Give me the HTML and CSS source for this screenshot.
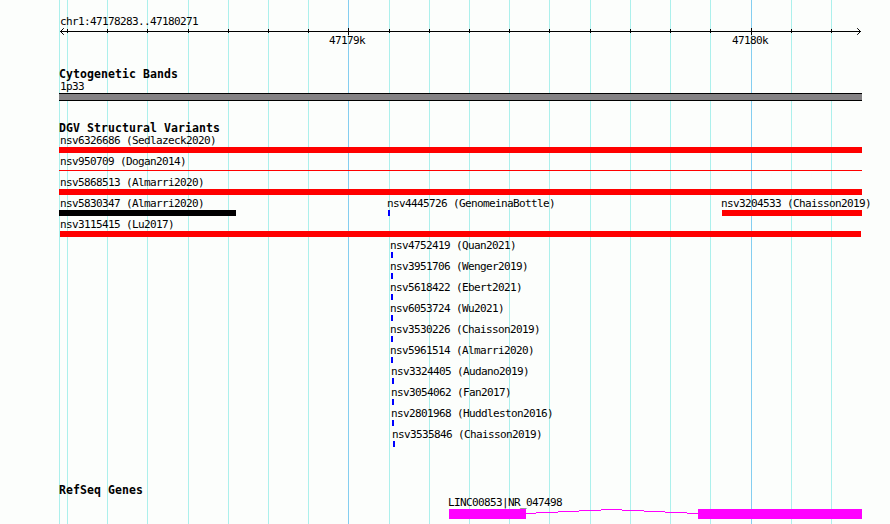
FILE: index.html
```html
<!DOCTYPE html>
<html lang="en">
  <head>
    <meta charset="UTF-8" />
    <title>chr1:47178283..47180271</title>
    <link rel="stylesheet" href="styles.css">
  </head>
  <body>
    <div class="browser">
      <!-- Grid lines behind all tracks -->
      <svg class="gridlines" width="890" height="524" shape-rendering="crispEdges">
        <path class="minor" d="M59.5 0V524M67.5 0V524M107.5 0V524M147.5 0V524M188.5 0V524M228.5 0V524M268.5 0V524M308.5 0V524M389.5 0V524M429.5 0V524M469.5 0V524M509.5 0V524M549.5 0V524M590.5 0V524M630.5 0V524M670.5 0V524M710.5 0V524M791.5 0V524M831.5 0V524" />
        <path class="major" d="M348.5 0V524M751.5 0V524" />
      </svg>

      <!-- Ruler -->
      <div class="ruler">
        <div class="label region">chr1:47178283..47180271</div>
        <svg class="scale" width="890" height="22" viewBox="0 26 890 22">
          <path shape-rendering="crispEdges" d="M60 31.5H861M67.5 29V33M107.5 29V33M147.5 29V33M188.5 29V33M228.5 29V33M268.5 29V33M308.5 29V33M348.5 28V35M389.5 29V33M429.5 29V33M469.5 29V33M509.5 29V33M549.5 29V33M590.5 29V33M630.5 29V33M670.5 29V33M710.5 29V33M751.5 28V35M791.5 29V33M831.5 29V33" />
          <path d="M63.8 28.2L60.5 31.5L63.8 34.8M857.2 28.2L860.5 31.5L857.2 34.8" />
          <text class="label" x="329" y="44">47179k</text>
          <text class="label" x="732" y="44">47180k</text>
        </svg>
      </div>

      <!-- Cytogenetic bands -->
      <div class="track bands">
        <h2>Cytogenetic Bands</h2>
        <div class="row">
          <div class="feature edge" style="margin-left: 59px; width: 803px">
            <span class="label">1p33</span>
            <div class="band"></div>
          </div>
        </div>
      </div>

      <!-- Structural variants -->
      <div class="track variants">
        <h2>DGV Structural Variants</h2>
        <div class="row">
          <div class="feature edge" style="margin-left: 59px; width: 803px"><span class="label">nsv6326686 (Sedlazeck2020)</span><div class="bar loss"></div></div>
        </div>
        <div class="row">
          <div class="feature edge" style="margin-left: 59px; width: 803px"><span class="label">nsv950709 (Dogan2014)</span><div class="bar loss thin"></div></div>
        </div>
        <div class="row">
          <div class="feature edge" style="margin-left: 59px; width: 803px"><span class="label">nsv5868513 (Almarri2020)</span><div class="bar loss"></div></div>
        </div>
        <div class="row">
          <div class="feature edge" style="margin-left: 59px; width: 177px"><span class="label">nsv5830347 (Almarri2020)</span><div class="bar other"></div></div>
          <div class="feature" style="margin-left: 388px; width: 2px"><span class="label">nsv4445726 (GenomeinaBottle)</span><div class="bar gain"></div></div>
          <div class="feature" style="margin-left: 722px; width: 140px"><span class="label">nsv3204533 (Chaisson2019)</span><div class="bar loss"></div></div>
        </div>
        <div class="row">
          <div class="feature flush" style="margin-left: 60px; width: 801px"><span class="label">nsv3115415 (Lu2017)</span><div class="bar loss"></div></div>
        </div>
        <div class="row">
          <div class="feature" style="margin-left: 391px; width: 2px"><span class="label">nsv4752419 (Quan2021)</span><div class="bar gain"></div></div>
        </div>
        <div class="row">
          <div class="feature" style="margin-left: 391px; width: 2px"><span class="label">nsv3951706 (Wenger2019)</span><div class="bar gain"></div></div>
        </div>
        <div class="row">
          <div class="feature" style="margin-left: 391px; width: 2px"><span class="label">nsv5618422 (Ebert2021)</span><div class="bar gain"></div></div>
        </div>
        <div class="row">
          <div class="feature" style="margin-left: 391px; width: 2px"><span class="label">nsv6053724 (Wu2021)</span><div class="bar gain"></div></div>
        </div>
        <div class="row">
          <div class="feature" style="margin-left: 391px; width: 2px"><span class="label">nsv3530226 (Chaisson2019)</span><div class="bar gain"></div></div>
        </div>
        <div class="row">
          <div class="feature" style="margin-left: 391px; width: 2px"><span class="label">nsv5961514 (Almarri2020)</span><div class="bar gain"></div></div>
        </div>
        <div class="row">
          <div class="feature" style="margin-left: 392px; width: 2px"><span class="label">nsv3324405 (Audano2019)</span><div class="bar gain"></div></div>
        </div>
        <div class="row">
          <div class="feature" style="margin-left: 392px; width: 2px"><span class="label">nsv3054062 (Fan2017)</span><div class="bar gain"></div></div>
        </div>
        <div class="row">
          <div class="feature" style="margin-left: 392px; width: 2px"><span class="label">nsv2801968 (Huddleston2016)</span><div class="bar gain"></div></div>
        </div>
        <div class="row">
          <div class="feature" style="margin-left: 393px; width: 2px"><span class="label">nsv3535846 (Chaisson2019)</span><div class="bar gain"></div></div>
        </div>
      </div>

      <!-- Genes -->
      <div class="track genes">
        <h2>RefSeq Genes</h2>
        <div class="row">
          <div class="feature" style="margin-left: 449px; width: 413px">
            <span class="label">LINC00853|NR_047498</span>
            <svg class="gene" width="413" height="10" shape-rendering="crispEdges">
              <rect x="0" y="0" width="77" height="10" />
              <rect x="249" y="0" width="164" height="10" />
              <path d="M77 4.5H87M87 3.5H109M109 2.5H130M130 1.5H152M152 .5H173M173 1.5H195M195 2.5H216M216 3.5H238M238 4.5H249" />
            </svg>
          </div>
        </div>
      </div>
    </div>
  </body>
</html>
```
FILE: styles.css
```css
body {
  margin: 0;
  background: #fcfefc;
  color: #000;
  font-family: "DejaVu Sans Mono", monospace;
}

.browser {
  position: relative;
  width: 890px;
  height: 524px;
  overflow: hidden;
  display: flex;
  flex-direction: column;
}

/* Grid lines */
.gridlines {
  position: absolute;
  top: 0;
  left: 0;
  z-index: -1;
}

.gridlines .minor {
  stroke: #acf0ec;
}

.gridlines .major {
  stroke: #84cef0;
}

/* Text, 6px per character */
.label {
  font-size: 11px;
  line-height: 13px;
  letter-spacing: -0.623px;
  white-space: pre;
}

h2 {
  height: 12px;
  margin: 0 0 0 59px;
  font-size: 11.5px;
  line-height: 12px;
  font-weight: bold;
  letter-spacing: 0.077px;
}

/* Ruler */
.ruler {
  height: 53px;
  padding-top: 15px;
}

.region {
  height: 11px;
  margin-left: 60px;
}

.scale {
  display: block;
  fill: none;
  stroke: #000;
}

.scale text {
  fill: #000;
  stroke: none;
}

/* Tracks */
.bands {
  height: 54px;
}

.variants {
  height: 362px;
}

.bands,
.variants,
.genes {
  flex: none;
}

.row {
  display: grid;
  height: 21px;
}

/* Features of a row share one cell and are offset by their start */
.feature {
  grid-area: 1 / 1;
  display: flex;
  flex-direction: column;
}

.feature .label {
  height: 13px;
  margin-left: -1px;
  z-index: 1;
}

.edge .label {
  margin-left: 1px;
}

.flush .label {
  margin-left: 0;
}

.bar {
  height: 6px;
}

.loss {
  background: #ff0000;
}

.gain {
  background: #0000ff;
}

.other {
  background: #000;
}

.thin {
  height: 1px;
  margin-top: 2px;
}

.band {
  box-sizing: border-box;
  height: 8px;
  border-top: 1px solid #000;
  border-bottom: 1px solid #000;
  background: #848284;
}

.gene {
  display: block;
  fill: #ff00ff;
  stroke: none;
}

.gene path {
  stroke: #ff00ff;
}
```
